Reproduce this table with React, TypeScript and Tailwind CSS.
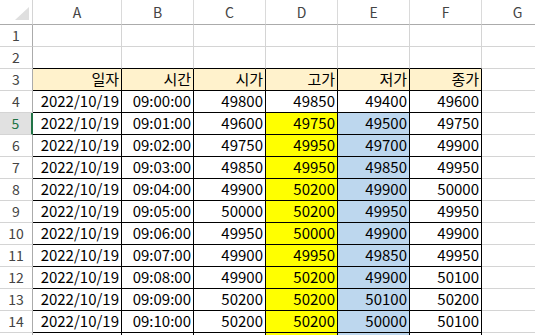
import React from "react"

const cols = ["A", "B", "C", "D", "E", "F", "G"]

const rows: string[][] = [
  ["09:00:00", "49800", "49850", "49400", "49600"],
  ["09:01:00", "49600", "49750", "49500", "49750"],
  ["09:02:00", "49750", "49950", "49700", "49900"],
  ["09:03:00", "49850", "49950", "49850", "49950"],
  ["09:04:00", "49900", "50200", "49900", "50000"],
  ["09:05:00", "50000", "50200", "49950", "49950"],
  ["09:06:00", "49950", "50000", "49900", "49900"],
  ["09:07:00", "49900", "49950", "49850", "49950"],
  ["09:08:00", "49900", "50200", "49900", "50100"],
  ["09:09:00", "50200", "50200", "50100", "50200"],
  ["09:10:00", "50200", "50200", "50000", "50100"],
]

const headers = ["일자", "시간", "시가", "고가", "저가", "종가"]

function RowHead({ n, active }: { n?: number; active?: boolean }) {
  return (
    <div
      className={`h-[22px] flex items-center justify-center text-[14px] border-b border-[#d4d4d4] ${
        active
          ? "bg-[#e1e1e1] text-[#217346] border-r-2 border-r-[#217346]"
          : "bg-white text-[#444] border-r border-r-[#ababab]"
      }`}
    >
      {n}
    </div>
  )
}

function Blank({ black }: { black?: boolean }) {
  return (
    <div
      className={`h-[22px] border-r border-r-[#d4d4d4] border-b ${
        black ? "border-b-black" : "border-b-[#d4d4d4]"
      }`}
    />
  )
}

function Cell({ bg, children }: { bg?: string; children?: React.ReactNode }) {
  return (
    <div
      className={`h-[22px] flex items-center justify-end pr-[2px] border-r border-b border-black ${bg ?? "bg-white"}`}
    >
      {children}
    </div>
  )
}

export default function App() {
  return (
    <div
      className="w-[535px] h-[335px] overflow-hidden bg-white text-[15px] text-black"
      style={{ fontFamily: '"Noto Sans CJK KR", "Noto Sans", sans-serif' }}
    >
      <div className="grid grid-cols-[33px_89px_72px_72px_72px_72px_72px_72px] w-[554px]">
        {/* Column headers */}
        <div className="h-[25px] border-b border-b-[#ababab] border-r border-r-[#d4d4d4] relative">
          <svg className="absolute left-0 top-0" width="33" height="25">
            <polygon points="15,20 29,20 29,7" fill="#dfdfdf" />
          </svg>
        </div>
        {cols.map((c) => (
          <div
            key={c}
            className="h-[25px] flex items-center justify-center text-[14px] border-b border-b-[#ababab] border-r border-r-[#dadada] text-[#444]"
          >
            {c}
          </div>
        ))}

        {/* Rows 1-2 */}
        <RowHead n={1} />
        {cols.map((c) => (
          <Blank key={c} />
        ))}
        <RowHead n={2} />
        {cols.map((c) => (
          <Blank key={c} black={c !== "G"} />
        ))}

        {/* Row 3 headers */}
        <RowHead n={3} />
        {headers.map((h) => (
          <Cell key={h} bg="bg-[#fff2cc]">
            {h}
          </Cell>
        ))}
        <Blank />

        {/* Data rows */}
        {rows.map((r, i) => (
          <React.Fragment key={i}>
            <RowHead n={i + 4} active={i === 1} />
            <Cell>2022/10/19</Cell>
            {r.map((v, j) => (
              <Cell
                key={j}
                bg={i > 0 && j === 2 ? "bg-[#ffff00]" : i > 0 && j === 3 ? "bg-[#bdd7ee]" : "bg-white"}
              >
                {v}
              </Cell>
            ))}
            <Blank />
          </React.Fragment>
        ))}

        {/* Row 15, only its top edge shows */}
        <RowHead />
        <Cell />
        <Cell />
        <Cell />
        <Cell bg="bg-[#ffff00]" />
        <Cell bg="bg-[#bdd7ee]" />
        <Cell />
        <Blank />
      </div>
    </div>
  )
}
